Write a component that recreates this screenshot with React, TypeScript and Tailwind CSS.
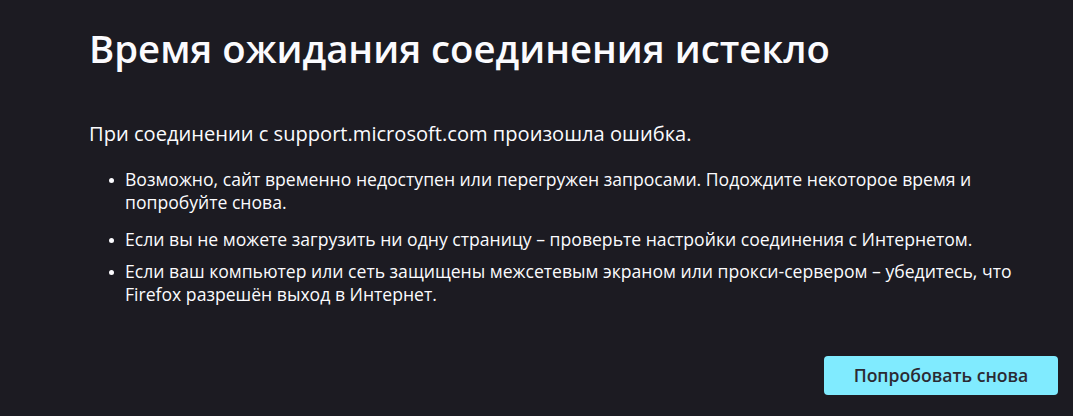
const items = [
  "Возможно, сайт временно недоступен или перегружен запросами. Подождите некоторое время и попробуйте снова.",
  "Если вы не можете загрузить ни одну страницу – проверьте настройки соединения с Интернетом.",
  "Если ваш компьютер или сеть защищены межсетевым экраном или прокси-сервером – убедитесь, что Firefox разрешён выход в Интернет.",
]

export default function App() {
  return (
    <div
      className="w-full h-[416px] overflow-hidden bg-[#1c1b22] text-[#fbfbfe] flex flex-col pl-[89px] pr-[15px] pt-[24px]"
      style={{ fontFamily: '"Open Sans", "Noto Sans", sans-serif' }}
    >
      <h1 className="text-[38.3px] leading-[48px] font-semibold">Время ожидания соединения истекло</h1>
      <p className="mt-[48px] text-[20.1px] leading-[28px]">
        При соединении с support.microsoft.com произошла ошибка.
      </p>
      <ul className="mt-[20px] pl-[20px] max-w-[940px] text-[17.6px] leading-[23.3px]">
        {items.map((t, i) => (
          <li key={i} className={`flex gap-[11px] ${i === 0 ? "mb-[13px]" : i === 1 ? "mb-[9px]" : ""}`}>
            <span className="w-[5px] h-[5px] mt-[10px] shrink-0 rounded-full bg-[#fbfbfe]" />
            <span>{t}</span>
          </li>
        ))}
      </ul>
      <div className="flex justify-end mt-auto mb-[21px]">
        <button className="w-[234px] h-[39px] rounded-[4px] bg-[#80ebff] text-[#2b2a33] text-[17.6px] font-semibold">
          Попробовать снова
        </button>
      </div>
    </div>
  )
}
